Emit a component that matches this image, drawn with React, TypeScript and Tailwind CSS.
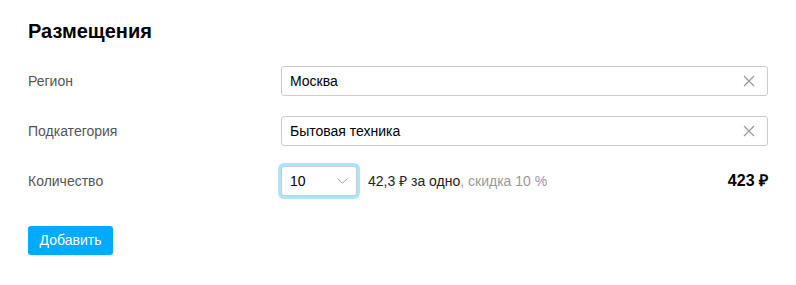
import React from "react";

const font = { fontFamily: '"Liberation Sans", Arial, sans-serif' };

function ClearIcon() {
  return (
    <svg width="12" height="12" viewBox="0 0 12 12" className="shrink-0">
      <path d="M1 1L11 11M11 1L1 11" stroke="#9a9a9a" strokeWidth="1.2" fill="none" />
    </svg>
  );
}

function Chevron() {
  return (
    <svg width="11" height="6" viewBox="0 0 11 6" className="shrink-0">
      <path d="M0.5 0.5L5.5 5.2L10.5 0.5" stroke="#a0a0a0" strokeWidth="1" fill="none" />
    </svg>
  );
}

function TextField({ value }: { value: string }) {
  return (
    <div className="flex h-[30px] w-[487px] items-center justify-between rounded-[3px] border border-[#cccccc] bg-white pl-[8px] pr-[12px] text-[14px] text-black">
      <span>{value}</span>
      <ClearIcon />
    </div>
  );
}

export default function App() {
  return (
    <div className="min-h-[285px] w-[796px] bg-white px-[28px] pt-[19px]" style={font}>
      <h1 className="h-[24px] text-[20px] font-bold leading-[24px] text-black">Размещения</h1>
      <div className="mt-[23px] flex flex-col gap-[20px]">
        <div className="flex h-[30px] items-center">
          <div className="w-[253px] text-[14px] text-[#555555]">Регион</div>
          <TextField value="Москва" />
        </div>
        <div className="flex h-[30px] items-center">
          <div className="w-[253px] text-[14px] text-[#555555]">Подкатегория</div>
          <TextField value="Бытовая техника" />
        </div>
        <div className="flex h-[30px] w-[740px] items-center">
          <div className="w-[253px] text-[14px] text-[#555555]">Количество</div>
          <div className="flex h-[30px] w-[76px] items-center justify-between rounded-[3px] border border-[#cccccc] bg-white pl-[8px] pr-[8px] text-[14px] text-black shadow-[0_0_0_3px_#ade3fb]">
            <span>10</span>
            <Chevron />
          </div>
          <div className="ml-[11px] text-[14px] text-[#222222]">
            42,3 ₽ за одно<span className="text-[#999999]">, скидка 10 %</span>
          </div>
          <div className="ml-auto text-[16px] font-bold text-black">423 ₽</div>
        </div>
      </div>
      <button className="mt-[30px] h-[29px] w-[85px] rounded-[3px] bg-[#00aaff] text-[14px] text-white">
        Добавить
      </button>
    </div>
  );
}
